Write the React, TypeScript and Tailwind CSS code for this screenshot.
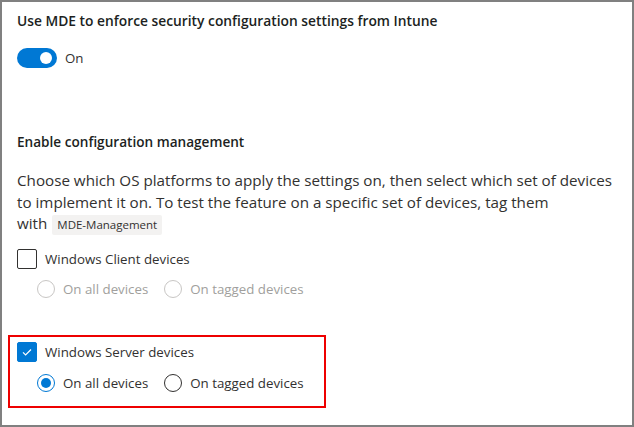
import React from "react";

const font = { fontFamily: '"Segoe UI", "Open Sans", "Noto Sans", sans-serif' };

function Radio({ checked, disabled, label }: { checked?: boolean; disabled?: boolean; label: string }) {
  const ring = disabled ? "border-[#c8c6c4]" : checked ? "border-[#0078d4]" : "border-[#323130]";
  return (
    <div className="flex items-center gap-[8px]">
      <div className={`w-[18px] h-[18px] rounded-full border ${ring} bg-white flex items-center justify-center`}>
        {checked && <div className="w-[10px] h-[10px] rounded-full bg-[#0078d4]" />}
      </div>
      <span className={`text-[13.3px] leading-[20px] ${disabled ? "text-[#a19f9d]" : "text-[#323130]"}`}>{label}</span>
    </div>
  );
}

function Checkbox({ checked, label }: { checked?: boolean; label: string }) {
  return (
    <div className="flex items-center gap-[8px]">
      <div
        className={`w-[20px] h-[20px] rounded-[2px] border flex items-center justify-center ${
          checked ? "bg-[#0078d4] border-[#0078d4]" : "bg-white border-[#323130]"
        }`}
      >
        {checked && (
          <svg width="12" height="12" viewBox="0 0 12 12" fill="none">
            <path d="M2 6.3l2.6 2.6L10 3.5" stroke="white" strokeWidth="1.2" />
          </svg>
        )}
      </div>
      <span className="text-[13.3px] leading-[20px] text-[#323130]">{label}</span>
    </div>
  );
}

export default function App() {
  return (
    <div className="w-[634px] h-[427px] bg-white border-2 border-[#808080] overflow-hidden" style={font}>
      <div className="pl-[15px] pr-[10px] pt-[9px]">
        <h2 className="text-[13.8px] leading-[20px] font-semibold text-[#201f1e]">
          Use MDE to enforce security configuration settings from Intune
        </h2>

        <div className="flex items-center gap-[8px] mt-[17px]">
          <div className="w-[40px] h-[20px] rounded-full bg-[#0078d4] relative">
            <div className="absolute right-[5px] top-[4px] w-[12px] h-[12px] rounded-full bg-white" />
          </div>
          <span className="text-[13.3px] leading-[20px] text-[#323130]">On</span>
        </div>

        <h3 className="text-[13.6px] leading-[20px] font-semibold text-[#201f1e] mt-[64px]">
          Enable configuration management
        </h3>

        <p className="text-[15.2px] leading-[21.5px] text-[#323130] mt-[18px] whitespace-nowrap">
          Choose which OS platforms to apply the settings on, then select which set of devices
          <br />
          to implement it on. To test the feature on a specific set of devices, tag them
          <br />
          with{" "}
          <span className="inline-block bg-[#f3f2f1] text-[11.5px] leading-[20px] px-[5px] ml-[1px] align-middle rounded-[2px]">
            MDE-Management
          </span>
        </p>

        <div className="mt-[14px]">
          <Checkbox label="Windows Client devices" />
          <div className="flex items-center gap-[16px] pl-[20px] mt-[10px]">
            <Radio disabled label="On all devices" />
            <Radio disabled label="On tagged devices" />
          </div>
        </div>

        <div className="-ml-[9px] mt-[36px] w-[318px] border-2 border-[#e00] pl-[7px] pt-[5px] pb-[13px]">
          <Checkbox checked label="Windows Server devices" />
          <div className="flex items-center gap-[16px] pl-[20px] mt-[11px]">
            <Radio checked label="On all devices" />
            <Radio label="On tagged devices" />
          </div>
        </div>
      </div>
    </div>
  );
}
